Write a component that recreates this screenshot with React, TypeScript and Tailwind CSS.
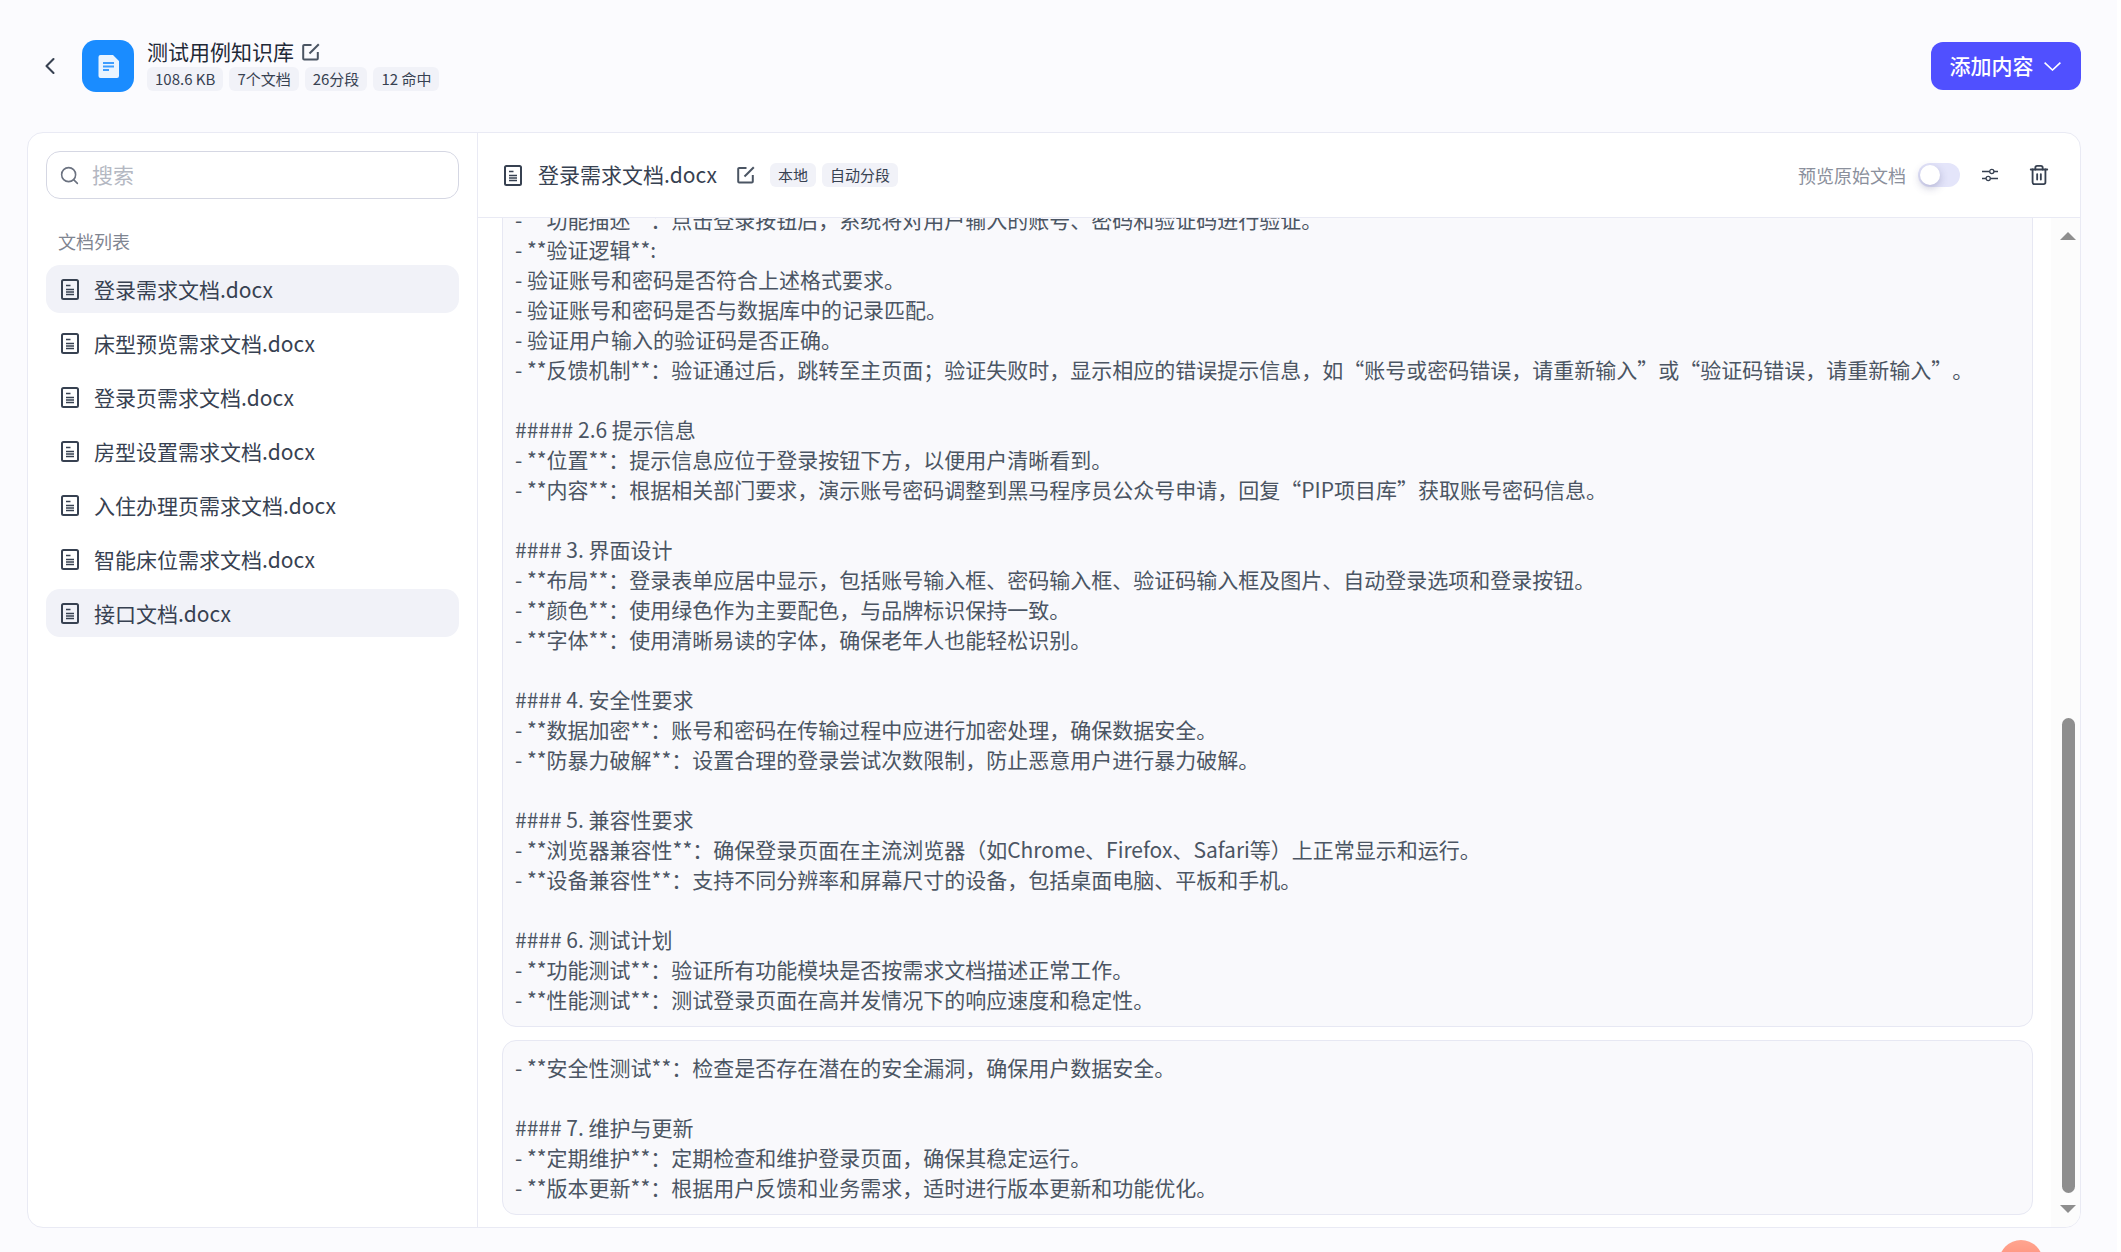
import { ChevronLeft, Search, Trash2 } from "lucide-react";

const FONT = "font-['Noto_Sans_CJK_SC','Noto_Sans',sans-serif]";

const docs = [
  { name: "登录需求文档.docx", active: true },
  { name: "床型预览需求文档.docx" },
  { name: "登录页需求文档.docx" },
  { name: "房型设置需求文档.docx" },
  { name: "入住办理页需求文档.docx" },
  { name: "智能床位需求文档.docx" },
  { name: "接口文档.docx", active: true },
];

const firstChunk = [
  "- **功能描述**：点击登录按钮后，系统将对用户输入的账号、密码和验证码进行验证。",
  "- **验证逻辑**:",
  "- 验证账号和密码是否符合上述格式要求。",
  "- 验证账号和密码是否与数据库中的记录匹配。",
  "- 验证用户输入的验证码是否正确。",
  "- **反馈机制**：验证通过后，跳转至主页面；验证失败时，显示相应的错误提示信息，如“账号或密码错误，请重新输入”或“验证码错误，请重新输入”。",
  "",
  "##### 2.6 提示信息",
  "- **位置**：提示信息应位于登录按钮下方，以便用户清晰看到。",
  "- **内容**：根据相关部门要求，演示账号密码调整到黑马程序员公众号申请，回复“PIP项目库”获取账号密码信息。",
  "",
  "#### 3. 界面设计",
  "- **布局**：登录表单应居中显示，包括账号输入框、密码输入框、验证码输入框及图片、自动登录选项和登录按钮。",
  "- **颜色**：使用绿色作为主要配色，与品牌标识保持一致。",
  "- **字体**：使用清晰易读的字体，确保老年人也能轻松识别。",
  "",
  "#### 4. 安全性要求",
  "- **数据加密**：账号和密码在传输过程中应进行加密处理，确保数据安全。",
  "- **防暴力破解**：设置合理的登录尝试次数限制，防止恶意用户进行暴力破解。",
  "",
  "#### 5. 兼容性要求",
  "- **浏览器兼容性**：确保登录页面在主流浏览器（如Chrome、Firefox、Safari等）上正常显示和运行。",
  "- **设备兼容性**：支持不同分辨率和屏幕尺寸的设备，包括桌面电脑、平板和手机。",
  "",
  "#### 6. 测试计划",
  "- **功能测试**：验证所有功能模块是否按需求文档描述正常工作。",
  "- **性能测试**：测试登录页面在高并发情况下的响应速度和稳定性。",
];

const secondChunk = [
  "- **安全性测试**：检查是否存在潜在的安全漏洞，确保用户数据安全。",
  "",
  "#### 7. 维护与更新",
  "- **定期维护**：定期检查和维护登录页面，确保其稳定运行。",
  "- **版本更新**：根据用户反馈和业务需求，适时进行版本更新和功能优化。",
];

function DocIcon({ className }: { className?: string }) {
  return (
    <svg viewBox="0 0 18 21" fill="none" stroke="#374151" className={className}>
      <rect x="1" y="1" width="16" height="19" rx="1.5" strokeWidth="2" />
      <path d="M5 6.5h4.5M5 10.5h8M5 13h8M5 15.5h8" strokeWidth="1.4" />
    </svg>
  );
}

function EditIcon({ className }: { className?: string }) {
  return (
    <svg viewBox="0 0 18 18" fill="none" stroke="#4b5563" strokeWidth="2" className={className}>
      <path d="M9.5 2H2.2a1 1 0 0 0-1 1v12.5a1 1 0 0 0 1 1h12.6a1 1 0 0 0 1-1V9" />
      <path d="M7.5 10.5 16.8 1.2" />
    </svg>
  );
}

function Tag({ children }: { children: string }) {
  return (
    <span className="flex h-6 items-center rounded-md bg-[#f1f2f8] px-2 text-[15px] text-[#374151]">
      {children}
    </span>
  );
}

function ChunkCard({ lines }: { lines: string[] }) {
  return (
    <div className="rounded-[14px] border border-[#e7e8f3] bg-[#f9f9fc] px-3 pb-3 pt-[11px] text-[21px] leading-[30px] text-[#4b5563] [text-spacing-trim:space-all]">
      {lines.map((line, i) => (
        <div key={i} className="h-[30px] whitespace-nowrap">
          {line}
        </div>
      ))}
    </div>
  );
}

export default function App() {
  return (
    <div className={`relative flex h-[1252px] flex-col overflow-hidden bg-[#fbfbfe] ${FONT}`}>
      <header className="flex h-[132px] shrink-0 items-center justify-between pl-[36px] pr-[40px]">
        <div className="flex items-center">
          <ChevronLeft className="h-[28px] w-[28px] text-[#374151]" strokeWidth={1.8} />
          <div className="ml-[18px] flex h-[52px] w-[52px] items-center justify-center rounded-[14px] bg-[#1a8cff]">
            <svg viewBox="0 0 21 23" className="h-[23px] w-[21px]">
              <path d="M2.5 0H15l6 6v15a2 2 0 0 1-2 2H2.5a2 2 0 0 1-2-2V2a2 2 0 0 1 2-2z" fill="#e9f4ff" />
              <path d="M5 8h11M5 11.5h11M5 15h6" stroke="#3d9dff" strokeWidth="2" />
            </svg>
          </div>
          <div className="ml-[13px] flex flex-col">
            <div className="flex h-[26px] -translate-y-[2px] items-center gap-2 text-[21px] text-[#1f2937]">
              测试用例知识库
              <EditIcon className="h-[18px] w-[18px]" />
            </div>
            <div className="flex gap-[6px]">
              <Tag>108.6 KB</Tag>
              <Tag>7个文档</Tag>
              <Tag>26分段</Tag>
              <Tag>12 命中</Tag>
            </div>
          </div>
        </div>
        <button className="flex h-12 w-[150px] items-center justify-center gap-[10px] rounded-xl bg-[#5050ff] pr-[2px] text-[21px] font-medium text-white">
          添加内容
          <svg viewBox="0 0 17 9" fill="none" stroke="white" strokeWidth="1.6" className="h-[9px] w-[17px]">
            <path d="M.6.6 8.5 8l7.9-7.4" />
          </svg>
        </button>
      </header>

      <main className="mx-[27px] mb-6 flex h-[1097px] w-[2054px] overflow-hidden rounded-2xl border border-[#e9eaf4] bg-white">
        <aside className="flex w-[450px] shrink-0 flex-col border-r border-[#e9eaf4] px-[18px] pt-[18px]">
          <div className="flex h-12 items-center gap-[12px] rounded-[14px] border border-[#d5d7e3] pl-[12px]">
            <Search className="h-[21px] w-[21px] text-[#6b7280]" strokeWidth={1.8} />
            <span className="text-[21px] text-[#b4b8c2]">搜索</span>
          </div>
          <div className="mb-[12px] mt-[30px] pl-3 text-[18px] leading-[24px] text-[#7f8591]">文档列表</div>
          <div className="flex flex-col gap-[6px]">
            {docs.map((doc) => (
              <div
                key={doc.name}
                className={`flex h-12 items-center gap-[15px] rounded-[14px] pl-[15px] pt-[1px] text-[21px] text-[#374151] ${doc.active ? "bg-[#f1f2f8]" : ""}`}
              >
                <DocIcon className="h-[21px] w-[18px] shrink-0" />
                {doc.name}
              </div>
            ))}
          </div>
        </aside>

        <section className="flex min-w-0 flex-1 flex-col">
          <div className="flex h-[85px] shrink-0 items-center justify-between border-b border-[#e9eaf4] pl-[26px] pr-[30px]">
            <div className="flex items-center">
              <DocIcon className="h-[21px] w-[18px]" />
              <span className="ml-[16px] text-[21px] text-[#374151]">登录需求文档.docx</span>
              <EditIcon className="ml-[20px] h-[18px] w-[18px]" />
              <div className="ml-[15px] flex gap-[6px]">
                <Tag>本地</Tag>
                <Tag>自动分段</Tag>
              </div>
            </div>
            <div className="flex items-center">
              <span className="text-[18px] text-[#8b909c]">预览原始文档</span>
              <div className="ml-3 flex h-6 w-[42px] items-center rounded-full bg-[#e4e5fa] pl-[2px]">
                <div className="h-5 w-5 rounded-full bg-white shadow-[0_3px_8px_rgba(60,60,120,0.3)]" />
              </div>
              <svg viewBox="0 0 16 16" fill="none" stroke="#374151" strokeWidth="1.3" className="ml-[22px] h-4 w-4">
                <path d="M0 4.5h7.5M12 4.5h4M0 11.5h4M8.5 11.5H16" />
                <circle cx="9.8" cy="4.5" r="2.1" />
                <circle cx="6.2" cy="11.5" r="2.1" />
              </svg>
              <Trash2 className="ml-[30px] h-[22px] w-[22px] text-[#374151]" strokeWidth={2} />
            </div>
          </div>

          <div className="flex min-h-0 flex-1">
            <div className="min-w-0 flex-1 overflow-hidden pl-[24px] pr-[18px]">
              <div className="-mt-[26px] flex flex-col gap-[13px]">
                <ChunkCard lines={firstChunk} />
                <ChunkCard lines={secondChunk} />
              </div>
            </div>
            <div className="relative w-[29px] shrink-0 bg-[#fcfcfc]">
              <div className="absolute left-[9px] top-[14px] h-0 w-0 border-x-[8px] border-b-[8px] border-x-transparent border-b-[#8e8e8e]" />
              <div className="absolute left-[11px] top-[500px] h-[475px] w-[13px] rounded-full bg-[#8e8e8e]" />
              <div className="absolute bottom-[14px] left-[9px] h-0 w-0 border-x-[8px] border-t-[8px] border-x-transparent border-t-[#8e8e8e]" />
            </div>
          </div>
        </section>
      </main>

      <div className="absolute left-[1999px] top-[1240px] h-11 w-11 rounded-full bg-gradient-to-b from-[#ffa590] to-[#ff7a66]" />
      <div className="absolute bottom-0 right-0 top-0 w-[4px] bg-white" />
    </div>
  );
}
